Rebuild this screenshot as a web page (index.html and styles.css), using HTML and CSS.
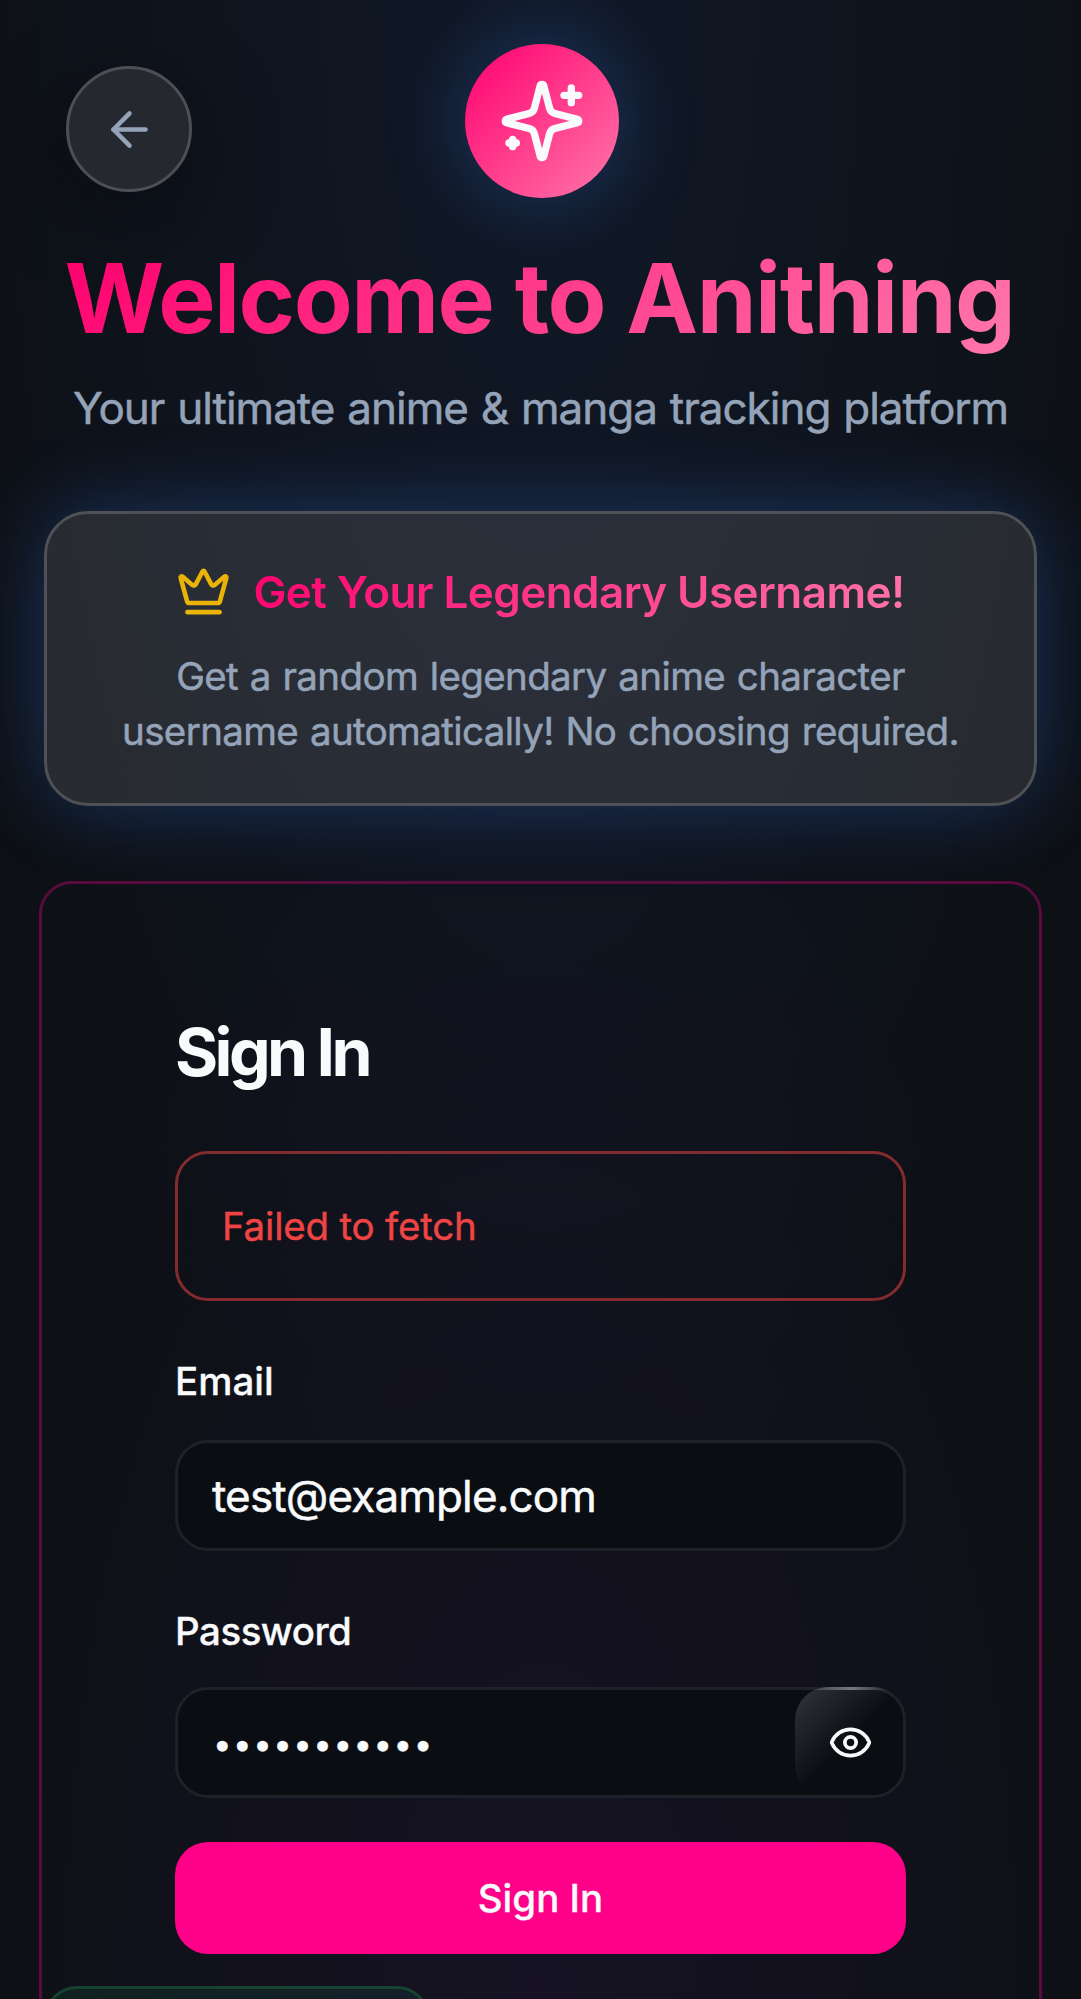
FILE: index.html
```html
<!DOCTYPE html>
<html lang="en">
<head>
<meta charset="utf-8">
<title>Anithing – Sign In</title>
<link rel="stylesheet" href="styles.css">
</head>
<body>
<main class="page">
  <button class="back" aria-label="Back">
    <svg viewBox="0 0 24 24" class="icon back-icon"><path d="m12 19-7-7 7-7"/><path d="M19 12H5"/></svg>
  </button>
  <header class="hero">
    <div class="logo">
      <svg viewBox="0 0 24 24" class="icon logo-icon"><path d="M9.937 15.5A2 2 0 0 0 8.5 14.063l-6.135-1.582a.5.5 0 0 1 0-.962L8.5 9.936A2 2 0 0 0 9.937 8.5l1.582-6.135a.5.5 0 0 1 .963 0L14.063 8.5A2 2 0 0 0 15.5 9.937l6.135 1.581a.5.5 0 0 1 0 .964L15.5 14.063a2 2 0 0 0-1.437 1.437l-1.582 6.135a.5.5 0 0 1-.963 0z"/><path d="M20 3v4"/><path d="M22 5h-4"/><path d="M4 17v2"/><path d="M5 18H3"/></svg>
    </div>
    <h1 class="title">Welcome to Anithing</h1>
    <p class="subtitle">Your ultimate anime &amp; manga tracking platform</p>
  </header>
  <section class="promo">
    <div class="promo-head">
      <svg viewBox="0 0 24 24" class="icon promo-icon"><path d="M11.562 3.266a.5.5 0 0 1 .876 0L15.39 8.87a1 1 0 0 0 1.516.294L21.183 5.5a.5.5 0 0 1 .798.519l-2.834 10.246a1 1 0 0 1-.956.734H5.81a1 1 0 0 1-.957-.734L2.02 6.02a.5.5 0 0 1 .798-.519l4.276 3.664a1 1 0 0 0 1.516-.294z"/><path d="M5 21h14"/></svg>
      <h3 class="promo-title">Get Your Legendary Username!</h3>
    </div>
    <p class="promo-text">Get a random legendary anime character<br>username automatically! No choosing required.</p>
  </section>
  <form class="card">
    <h2 class="card-title">Sign In</h2>
    <div class="alert">Failed to fetch</div>
    <div class="field">
      <label class="label" for="email">Email</label>
      <input class="input" id="email" type="email" value="test@example.com">
    </div>
    <div class="field field-password">
      <label class="label label-password" for="password">Password</label>
      <div class="input-wrap">
        <input class="input secret" id="password" type="password" value="password123">
        <button class="reveal" type="button" aria-label="Show password">
          <svg viewBox="0 0 24 24" class="icon reveal-icon"><path d="M2.062 12.348a1 1 0 0 1 0-.696 10.75 10.75 0 0 1 19.876 0 1 1 0 0 1 0 .696 10.75 10.75 0 0 1-19.876 0"/><circle cx="12" cy="12" r="3"/></svg>
        </button>
      </div>
    </div>
    <button class="submit" type="button">Sign In</button>
  </form>
  <div class="toast"></div>
</main>
</body>
</html>
```
FILE: styles.css
```css
* { box-sizing: border-box; margin: 0; padding: 0; }
html, body { height: 1999px; overflow: hidden; }
body { background: #0b0e13; color: #f8fafc; font-family: Inter, sans-serif; }
h1, h2, h3, p { font-weight: 400; }
button, input { font: inherit; color: inherit; border: 0; outline: 0; }

.icon { display: block; flex: none; fill: none; stroke: currentColor; stroke-width: 2; stroke-linecap: round; stroke-linejoin: round; }

.page {
  position: relative;
  height: 1999px;
  overflow: hidden;
  padding: 44px 39px 0;
  background:
    radial-gradient(ellipse 620px 1600px at 50% 0%, rgba(59, 120, 246, .085), transparent),
    radial-gradient(ellipse 580px 1250px at 50% 100%, rgba(147, 51, 234, .07), transparent),
    #0d1015;
}

.back {
  position: absolute;
  left: 66px;
  top: 66px;
  width: 126px;
  height: 126px;
  display: flex;
  align-items: center;
  justify-content: center;
  border: 3px solid #4d4f53;
  border-radius: 50%;
  background: #25282e;
  color: #94a3b8;
  box-shadow: 0 22px 88px rgba(0, 0, 0, .35);
}
.back-icon { width: 55px; height: 55px; }

.hero { display: flex; flex-direction: column; align-items: center; }
.logo {
  width: 154px;
  height: 154px;
  margin-left: 2px;
  display: flex;
  align-items: center;
  justify-content: center;
  border-radius: 50%;
  background: linear-gradient(135deg, #ff006e, #ff77aa);
  box-shadow: 0 0 82px rgba(59, 130, 246, .3);
}
.logo-icon { width: 88px; height: 88px; }
.title {
  margin: 40px 2px 0 0;
  font-size: 96.25px;
  line-height: 120px;
  font-weight: 700;
  letter-spacing: -1.5px;
  white-space: nowrap;
  background: linear-gradient(135deg, #ff006e, #ff77aa);
  background-clip: text;
  color: transparent;
}
.subtitle {
  margin-top: 17px;
  font-size: 44px;
  line-height: 66px;
  letter-spacing: -1px;
  word-spacing: 1.5px;
  -webkit-text-stroke: .5px currentColor;
  color: #94a3b8;
  white-space: nowrap;
}

.promo {
  margin: 70px 5px 0;
  height: 295px;
  padding: 44px;
  border: 3px solid #4f5156;
  border-radius: 44px;
  background: rgba(255, 255, 255, .11);
  box-shadow: 0 0 82px rgba(59, 130, 246, .3);
  text-align: center;
}
.promo-head { height: 66px; display: flex; align-items: center; justify-content: center; gap: 22px; }
.promo-icon { width: 55px; height: 55px; color: #eab308; }
.promo-title {
  padding-top: 2px;
  font-size: 44px;
  line-height: 66px;
  font-weight: 600;
  letter-spacing: -.55px;
  background: linear-gradient(135deg, #ff006e, #ff77aa);
  background-clip: text;
  color: transparent;
}
.promo-text {
  margin-top: 25px;
  font-size: 38.5px;
  line-height: 55px;
  letter-spacing: -.62px;
  word-spacing: 1.5px;
  -webkit-text-stroke: .5px currentColor;
  color: #94a3b8;
  white-space: nowrap;
}

.card {
  margin-top: 75px;
  height: 1200px;
  padding: 127px 133px 0;
  border: 3px solid #5a0b3d;
  border-radius: 33px;
}
.card-title { font-size: 66px; line-height: 82px; font-weight: 700; letter-spacing: -3.6px; }
.alert {
  height: 150px;
  margin-top: 58px;
  padding-left: 44px;
  display: flex;
  align-items: center;
  border: 3px solid #842b30;
  border-radius: 33px;
  font-size: 38.5px;
  letter-spacing: -.2px;
  -webkit-text-stroke: .4px currentColor;
  color: #ef4444;
}
.field { margin-top: 61px; display: flex; flex-direction: column; gap: 39px; }
.field-password { gap: 36px; }
.label { font-size: 38.5px; line-height: 39px; font-weight: 500; -webkit-text-stroke: .3px currentColor; }
.label-password { letter-spacing: -.5px; }
.input {
  width: 100%;
  height: 111px;
  padding: 0 34px;
  border: 3px solid #1e2128;
  border-radius: 33px;
  background: #0a0d12;
  font-size: 44px;
  letter-spacing: -.85px;
  -webkit-text-stroke: .5px currentColor;
}
.secret { padding: 2px 35px 0; font-size: 33px; letter-spacing: 1.5px; }
.input-wrap { position: relative; height: 111px; }
.reveal {
  position: absolute;
  right: 0;
  top: 0;
  width: 111px;
  height: 111px;
  display: flex;
  align-items: center;
  justify-content: center;
  overflow: hidden;
  border-radius: 33px;
  background:
    linear-gradient(90deg, transparent 15%, rgba(255, 255, 255, .35), transparent 85%) top / 100% 3px no-repeat,
    linear-gradient(135deg, rgba(255, 255, 255, .17), transparent 50%);
}
.reveal-icon { width: 45px; height: 45px; }
.submit {
  width: 100%;
  height: 112px;
  margin-top: 44px;
  border-radius: 33px;
  background: #ff0088;
  font-size: 38.5px;
  font-weight: 500;
  -webkit-text-stroke: .3px currentColor;
}

.toast {
  position: absolute;
  left: 44px;
  top: 1986px;
  width: 386px;
  height: 110px;
  border: 3px solid #15432f;
  border-radius: 33px;
  background: linear-gradient(90deg, #10221f, #14202a);
}
```
